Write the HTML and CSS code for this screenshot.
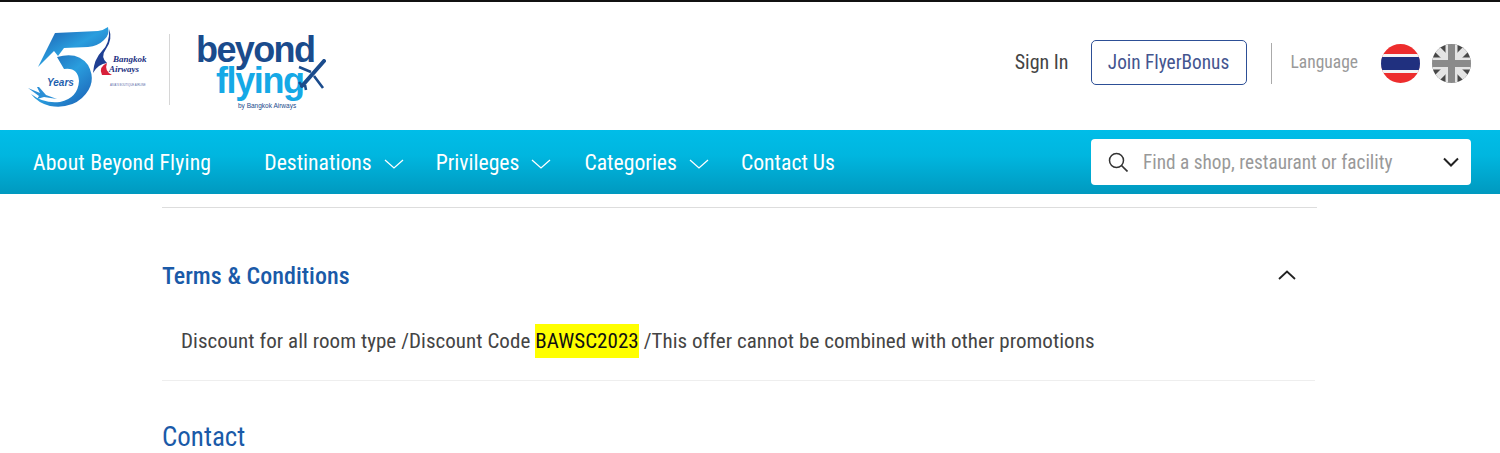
FILE: index.html
```html
<!DOCTYPE html>
<html lang="en">
<head>
    <meta charset="UTF-8">
    <meta name="viewport" content="width=device-width, initial-scale=1.0">
    <title>Beyond Flying</title>
    <link rel="stylesheet" href="styles.css">
</head>
<body>
    <header class="top">
        <div class="logos">
            <svg class="logo-five" width="122" height="84" viewBox="0 0 122 84">
                <defs>
                    <linearGradient id="fiveBlue" x1="0" y1="0" x2="1" y2="1">
                        <stop offset="0" stop-color="#1b57ab"/>
                        <stop offset="0.5" stop-color="#2a9ede"/>
                        <stop offset="1" stop-color="#1a5cb2"/>
                    </linearGradient>
                </defs>
                <path d="M10 40 L27 6 L70 4 Q76 3 80 0 Q82 8 76 13 Q70 19 60 20 L36 21 L30 29 L26 24 Z" fill="url(#fiveBlue)"/>
                <path d="M29 30 Q50 24 60 38 Q70 56 54 71 Q42 82 22 79 Q10 76 3 67 Q16 77 32 75 Q50 71 51 54 Q50 40 36 42 Z" fill="url(#fiveBlue)"/>
                <path d="M0 61 L12 66 L9 60 L11 60 L18 68 L29 72 L16 70 L9 72 L11 69 Z" fill="#2b8fd6"/>
                <path d="M81 2 Q82 16 74 24 Q66 32 65 46 Q70 37 79 36 Q72 30 78 22 Q85 12 81 2 Z" fill="#1f3f93"/>
                <path d="M79 36 Q70 40 74 48 L84 48 Q76 44 79 36 Z" fill="#d8203a"/>
                <text class="logo-years" x="19" y="59">Years</text>
                <text class="logo-bangkok" x="85" y="35">Bangkok</text>
                <text class="logo-bangkok" x="81" y="45">Airways</text>
                <text class="logo-asia" x="82" y="59">ASIA'S BOUTIQUE AIRLINE</text>
            </svg>
            <span class="logo-rule"></span>
            <div class="logo-beyond">
                <span class="beyond-word">beyond</span>
                <span class="flying-word">flying</span>
                <svg class="logo-plane" width="28" height="32" viewBox="0 0 28 32">
                    <path d="M26 2 L4 27" stroke="#1a4b8c" stroke-width="4" stroke-linecap="round"/>
                    <path d="M1 8 L13 13 M16 17 L25 29 M4 27 L1 23 M7 26 L8 31" stroke="#1a4b8c" stroke-width="2.6" fill="none"/>
                </svg>
                <span class="by-word">by Bangkok Airways</span>
            </div>
        </div>
        <div class="account">
            <a class="sign-in">Sign In</a>
            <a class="join-btn">Join FlyerBonus</a>
            <span class="account-rule"></span>
            <span class="language">Language</span>
            <svg class="flag" width="39" height="39" viewBox="0 0 39 39">
                <defs><clipPath id="flagCircle"><circle cx="19.5" cy="19.5" r="19.5"/></clipPath></defs>
                <g clip-path="url(#flagCircle)">
                    <rect width="39" height="39" fill="#ed2d2d"/>
                    <rect y="10" width="39" height="19" fill="#f4f4f4"/>
                    <rect y="13" width="39" height="13" fill="#20307f"/>
                </g>
            </svg>
            <svg class="flag flag-uk" width="39" height="39" viewBox="0 0 39 39">
                <g clip-path="url(#flagCircle)">
                    <rect width="39" height="39" fill="#484848"/>
                    <path d="M0 0 L39 39 M39 0 L0 39" stroke="#e4e4e4" stroke-width="7"/>
                    <path d="M19.5 0 V39 M0 19.5 H39" stroke="#e4e4e4" stroke-width="12"/>
                    <path d="M19.5 0 V39 M0 19.5 H39" stroke="#8a8a8a" stroke-width="7"/>
                </g>
            </svg>
        </div>
    </header>

    <nav class="mainnav">
        <div class="nav-links">
            <a class="nav-item nav-about">About Beyond Flying</a>
            <a class="nav-item nav-dest">Destinations
                <svg width="20" height="10" viewBox="0 0 20 10"><path d="M1 1 L10 9 L19 1" fill="none" stroke="#fff" stroke-width="1.3"/></svg>
            </a>
            <a class="nav-item nav-priv">Privileges
                <svg width="20" height="10" viewBox="0 0 20 10"><path d="M1 1 L10 9 L19 1" fill="none" stroke="#fff" stroke-width="1.3"/></svg>
            </a>
            <a class="nav-item nav-cat">Categories
                <svg width="20" height="10" viewBox="0 0 20 10"><path d="M1 1 L10 9 L19 1" fill="none" stroke="#fff" stroke-width="1.3"/></svg>
            </a>
            <a class="nav-item">Contact Us</a>
        </div>
        <div class="search-box">
            <svg width="20" height="20" viewBox="0 0 20 20"><circle cx="8.5" cy="8.5" r="7" fill="none" stroke="#333" stroke-width="1.5"/><path d="M13.5 13.5 L19.5 19.5" stroke="#333" stroke-width="1.7"/></svg>
            <span class="search-text">Find a shop, restaurant or facility</span>
            <svg width="16" height="10" viewBox="0 0 16 10"><path d="M1 1.5 L8 8.5 L15 1.5" fill="none" stroke="#222" stroke-width="2"/></svg>
        </div>
    </nav>

    <main class="content">
        <div class="rule-top"></div>
        <section class="terms">
            <div class="terms-head">
                <h2>Terms &amp; Conditions</h2>
                <svg class="terms-chevron" width="18" height="10" viewBox="0 0 18 10"><path d="M1 9 L9 1.5 L17 9" fill="none" stroke="#222" stroke-width="1.8"/></svg>
            </div>
            <p class="terms-text">Discount for all room type /Discount Code <mark>BAWSC2023</mark> /This offer cannot be combined with other promotions</p>
        </section>
        <h2 class="contact">Contact</h2>
    </main>
</body>
</html>
```

FILE: styles.css
```css
html, body {
    height: 453px;
    overflow: hidden;
}

body {
    margin: 0;
    background: #fff;
    font-family: "Roboto", "Liberation Sans", sans-serif;
    font-stretch: 75%;
    color: #444;
    border-top: 2px solid #111;
    box-sizing: border-box;
}

a {
    text-decoration: none;
}

/* top bar */
.top {
    height: 128px;
    display: flex;
    justify-content: space-between;
    align-items: center;
    padding: 0 29px 0 28px;
}

.logos {
    display: flex;
    align-items: center;
}

.logo-five {
    margin-top: 6px;
}

.logo-years {
    font: italic bold 10px "Liberation Sans", sans-serif;
    fill: #1f5fae;
}

.logo-bangkok {
    font: italic bold 9px "Liberation Serif", serif;
    fill: #22307f;
}

.logo-asia {
    font: 2.8px "Liberation Sans", sans-serif;
    fill: #5b6aa8;
}

.logo-rule {
    width: 1px;
    height: 71px;
    background: #d6d6d6;
    margin: 6px 26px 0 19px;
}

.logo-beyond {
    position: relative;
    width: 130px;
    height: 80px;
    margin-top: 16px;
}

.beyond-word {
    display: block;
    font: bold 36px/31px "Liberation Sans", sans-serif;
    letter-spacing: -1.6px;
    color: #1a4b8c;
}

.flying-word {
    display: block;
    font: bold 36px/31px "Liberation Sans", sans-serif;
    letter-spacing: -1.4px;
    color: #15a9e6;
    margin-left: 20px;
}

.logo-plane {
    position: absolute;
    left: 102px;
    top: 25px;
}

.by-word {
    position: absolute;
    left: 42px;
    top: 68px;
    font: 6.5px "Liberation Sans", sans-serif;
    color: #1a4b8c;
    white-space: nowrap;
}

.account {
    display: flex;
    align-items: center;
    margin-top: -8px;
}

.sign-in {
    font-size: 20px;
    color: #444;
    margin-right: 22px;
}

.join-btn {
    width: 154px;
    height: 43px;
    border: 1px solid #2d4f96;
    border-radius: 5px;
    display: flex;
    align-items: center;
    justify-content: center;
    font-size: 19.3px;
    color: #44558f;
    margin-right: 24px;
}

.account-rule {
    width: 1px;
    height: 41px;
    background: #aaa;
    margin: 2px 19px 0 0;
}

.language {
    font-size: 17.5px;
    color: #999;
    margin-right: 23px;
}

.flag {
    margin-top: 2px;
}

.flag-uk {
    margin-left: 12px;
}

/* nav */
.mainnav {
    height: 64px;
    background: linear-gradient(to bottom, #00bde8 0%, #00b6df 40%, #0099bf 100%);
    display: flex;
    justify-content: space-between;
    align-items: center;
    padding: 0 29px 0 33px;
}

.nav-links {
    display: flex;
    align-items: center;
}

.nav-item {
    color: #fff;
    font-size: 21.7px;
    display: flex;
    align-items: center;
    gap: 12px;
}

.nav-item svg {
    margin-top: 3px;
}

.nav-about {
    letter-spacing: 0.2px;
    margin-right: 53px;
}

.nav-dest {
    margin-right: 32px;
}

.nav-priv {
    margin-right: 33px;
}

.nav-cat {
    margin-right: 32px;
}

.search-box {
    width: 380px;
    height: 46px;
    box-sizing: border-box;
    background: #fff;
    border-radius: 4px;
    display: flex;
    align-items: center;
    padding: 0 12px 0 17px;
}

.search-text {
    flex: 1;
    font-size: 19.3px;
    color: #999;
    margin-left: 15px;
}

/* content */
.content {
    padding: 0 183px 0 162px;
}

.rule-top {
    height: 1px;
    background: #ddd;
    margin-top: 13px;
}

.terms {
    border-bottom: 1px solid #eee;
    margin-right: 2px;
    padding-bottom: 26px;
}

.terms-head {
    display: flex;
    justify-content: space-between;
    align-items: center;
    padding: 54px 20px 0 0;
}

.terms-head h2 {
    margin: 0;
    font-size: 24px;
    font-weight: 500;
    letter-spacing: 0.05px;
    line-height: 28px;
    color: #1a5aa8;
}

.terms-chevron {
    margin: 0 -1px 2px 0;
}

.terms-text {
    margin: 38px 0 0 19px;
    font-size: 21px;
    letter-spacing: 0.05px;
    line-height: 26px;
    color: #444;
}

.terms-text mark {
    background: #ffff00;
    color: #111;
    padding: 5px 0;
}

.contact {
    margin: 39px 0 0;
    font-size: 27px;
    font-weight: 400;
    line-height: 34px;
    color: #1a5aa8;
}
```
